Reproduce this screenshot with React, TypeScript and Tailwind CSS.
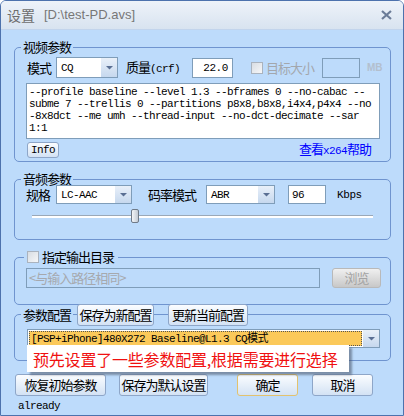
import clsx from "clsx";

const cjk = "font-['Noto_Sans_CJK_SC',sans-serif]";
const mono = "font-['Liberation_Mono','Noto_Sans_CJK_SC',monospace]";

const Arrow = () => (
  <svg width="7" height="5" viewBox="0 0 7 5">
    <polygon points="0,1 7,1 3.5,4.5" fill="#5a6f93" />
  </svg>
);

const Combo = ({ className, text }: { className: string; text: string }) => (
  <div className={clsx("flex bg-white border border-[#7f9db9]", className)}>
    <div className={clsx("flex-1 flex items-center pl-[4px] text-[11px] leading-[12px] tracking-[-0.6px] text-black", mono)}>{text}</div>
    <div className="w-[16px] flex items-center justify-center bg-linear-to-b from-[#e9f0f9] to-[#c6d8ee]">
      <Arrow />
    </div>
  </div>
);

const Btn = ({
  className,
  children,
  disabled,
  def,
}: {
  className: string;
  children: React.ReactNode;
  disabled?: boolean;
  def?: boolean;
}) => (
  <button
    className={clsx(
      "flex items-center justify-center rounded-[3px] border text-[13px] leading-[16px] tracking-[-1px] whitespace-nowrap",
      cjk,
      disabled
        ? "border-[#b9b9b9] bg-linear-to-b from-[#f0f0f0] to-[#c8c8c8] text-[#a3a3a3]"
        : def
          ? "border-[#e2c26e] bg-linear-to-b from-[#fbfdff] to-[#d3e2f4] text-black"
          : "border-[#8ea6c8] bg-linear-to-b from-[#fbfdff] to-[#d3e2f4] text-black",
      className
    )}
  >
    {children}
  </button>
);

const Check = () => (
  <div className="w-[12px] h-[12px] border border-[#aab3be] bg-linear-to-br from-[#d8dde3] to-[#f6f7f8]" />
);

const Legend = ({ children }: { children: React.ReactNode }) => (
  <div className="-mt-[8px] ml-[6px] h-[14px] flex">
    <span className={clsx("bg-[#bddbfb] px-[2px] leading-[14px] text-[13px] tracking-[-1px] text-black", cjk)}>
      {children}
    </span>
  </div>
);

export default function App() {
  return (
    <div className={clsx("w-[404px] h-[416px] flex flex-col border border-[#4d72ad] rounded-t-[6px] overflow-hidden", cjk)}>
      {/* title bar */}
      <div className="h-[29px] flex items-center pl-[6px] bg-linear-to-b from-[#eef3f9] to-[#d8e3f0] border-b border-[#c2d4ec]">
        <span className="text-[14px] text-[#6d6d6d]">设置</span>
        <span className="ml-[9px] text-[13px] text-[#777] font-['Liberation_Sans',sans-serif]">{"[D:\\test-PD.avs]"}</span>
        <svg className="ml-auto mr-[11px]" width="11" height="10" viewBox="0 0 11 10">
          <path d="M1 1 L10 9 M10 1 L1 9" stroke="#6b7c98" strokeWidth="2.2" />
        </svg>
      </div>

      {/* body */}
      <div className="flex-1 bg-[#bddbfb] pl-[13px] flex flex-col">
        {/* video */}
        <div className="mt-[17px] w-[377px] h-[115px] border border-[#6f94cf] rounded-[5px] flex flex-col">
          <Legend>视频参数</Legend>
          <div className="mt-[3px] h-[21px] flex items-center pl-[12px] text-[13px] leading-[14px] tracking-[-1px]">
            <span className="w-[24px]">模式</span>
            <Combo className="ml-[5px] w-[62px] h-[21px]" text="CQ" />
            <span className="ml-[8px] w-[54px] whitespace-nowrap">
              质量<span className={clsx("text-[11px] tracking-[-0.6px]", mono)}>(crf)</span>
            </span>
            <div className={clsx("ml-[12px] w-[41px] h-[20px] bg-white border border-[#7f9db9] flex items-center justify-end pr-[4px] text-[11px] tracking-[-0.4px]", mono)}>
              22.0
            </div>
            <div className="ml-[18px]">
              <Check />
            </div>
            <span className="ml-[3px] w-[48px] text-[#a3a7ad]">目标大小</span>
            <div className="ml-[8px] w-[38px] h-[20px] border border-[#7f9db9]" />
            <span className="ml-[7px] text-[10px] tracking-normal font-bold text-[#b3bfce] font-['Liberation_Sans',sans-serif]">MB</span>
          </div>
          <div className={clsx("mt-[5px] ml-[11px] w-[354px] h-[56px] bg-white border border-[#7f9db9] pl-[2px] pt-[2px] text-[11px] leading-[12px] tracking-[-0.6px] text-black whitespace-pre", mono)}>
            <div>--profile baseline --level 1.3 --bframes 0 --no-cabac --</div>
            <div>subme 7 --trellis 0 --partitions p8x8,b8x8,i4x4,p4x4 --no</div>
            <div>-8x8dct --me umh --thread-input --no-dct-decimate --sar</div>
            <div>1:1</div>
          </div>
          <div className="mt-[3px] h-[16px] flex items-center pl-[12px] pr-[19px]">
            <Btn className="w-[32px] h-[16px] rounded-[2px]">
              <span className={clsx("text-[11px] tracking-[-0.6px]", mono)}>Info</span>
            </Btn>
            <span className="ml-auto text-[13px] leading-[16px] tracking-[-1px] text-[#0000ff]">
              查看<span className={clsx("text-[11px] tracking-[-0.6px]", mono)}>x264</span>帮助
            </span>
          </div>
        </div>

        {/* audio */}
        <div className="mt-[17px] w-[377px] h-[61px] border border-[#6f94cf] rounded-[5px] flex flex-col">
          <Legend>音频参数</Legend>
          <div className="-mt-[1px] h-[19px] flex items-center pl-[11px] text-[13px] leading-[14px] tracking-[-1px]">
            <span className="w-[24px]">规格</span>
            <Combo className="ml-[6px] w-[76px] h-[19px]" text="LC-AAC" />
            <span className="ml-[16px] w-[48px]">码率模式</span>
            <Combo className="ml-[10px] w-[69px] h-[19px]" text="ABR" />
            <div className={clsx("ml-[13px] w-[38px] h-[19px] bg-white border border-[#7f9db9] flex items-center pl-[3px] text-[11px] tracking-[-0.6px]", mono)}>
              96
            </div>
            <span className={clsx("ml-[11px] text-[11px] tracking-[-0.4px]", mono)}>Kbps</span>
          </div>
          <div className="relative mt-[5px] ml-[17px] w-[341px] h-[14px]">
            <div className="mt-[6px] h-[3px] bg-white border-t border-[#9aa8b8]" />
            <div className="absolute left-[99px] top-0 w-[8px] h-[14px] rounded-[2px] border border-[#6f7a88] bg-linear-to-r from-[#f4f6f9] to-[#c4cbd4]" />
          </div>
        </div>

        {/* output dir */}
        <div className="mt-[17px] w-[377px] h-[48px] border border-[#6f94cf] rounded-[5px] flex flex-col">
          <div className="-mt-[9px] ml-[9px] h-[16px] flex">
            <div className="bg-[#bddbfb] pl-[3px] pr-[4px] flex items-center">
              <Check />
              <span className="ml-[3px] text-[13px] tracking-[-1px] leading-[16px] text-black">指定输出目录</span>
            </div>
          </div>
          <div className="mt-[3px] flex items-center pl-[11px]">
            <div className="w-[294px] h-[20px] border border-[#7f9db9] flex items-center pl-[2px] text-[13px] leading-[16px] tracking-[-1px] text-[#a6a9ae]">
              {"<与输入路径相同>"}
            </div>
            <Btn disabled className="ml-[12px] w-[49px] h-[20px] rounded-[2px]">
              浏览
            </Btn>
          </div>
        </div>

        {/* presets */}
        <div className="relative mt-[9px] w-[377px] h-[47px] border border-[#6f94cf] rounded-[5px] flex flex-col">
          <div className="-mt-[11px] ml-[6px] h-[22px] flex items-center">
            <span className="bg-[#bddbfb] px-[2px] leading-[16px] text-[13px] tracking-[-1px]">参数配置</span>
            <Btn className="ml-[4px] w-[77px] h-[22px]">保存为新配置</Btn>
            <Btn className="ml-[14px] w-[80px] h-[22px]">更新当前配置</Btn>
          </div>
          <div className="mt-[3px] ml-[12px] w-[353px] h-[19px] flex bg-white border border-[#7f9db9]">
            <div className="flex-1 m-[1px] bg-[#fbc95a] border border-dotted border-[#555] flex items-center pl-[1px]">
              <span className={clsx("text-[11px] leading-[12px] tracking-[-0.6px] text-black whitespace-nowrap", mono)}>
                [PSP+iPhone]480X272 Baseline@L1.3 CQ模式
              </span>
            </div>
            <div className="w-[16px] flex items-center justify-center bg-linear-to-b from-[#e9f0f9] to-[#c6d8ee]">
              <Arrow />
            </div>
          </div>
          <div className="absolute left-[12px] top-[30px] w-[322px] h-[27px] bg-white shadow-[3px_3px_2px_rgba(70,80,100,0.55)] flex items-center pl-[6px]">
            <span className="text-[16px] leading-[20px] tracking-[-0.2px] text-[#f01010]">预先设置了一些参数配置,根据需要进行选择</span>
          </div>
        </div>

        {/* bottom buttons */}
        <div className="mt-[13px] flex items-center">
          <Btn className="ml-[1px] w-[91px] h-[22px]">恢复初始参数</Btn>
          <Btn className="ml-[13px] w-[89px] h-[22px]">保存为默认设置</Btn>
          <Btn def className="ml-[29px] w-[61px] h-[22px]">确定</Btn>
          <Btn className="ml-[14px] w-[61px] h-[22px]">取消</Btn>
        </div>
        <div className={clsx("mt-[4px] ml-[4px] text-[11px] leading-[12px] tracking-[-0.6px] text-black", mono)}>already</div>
      </div>
    </div>
  );
}
